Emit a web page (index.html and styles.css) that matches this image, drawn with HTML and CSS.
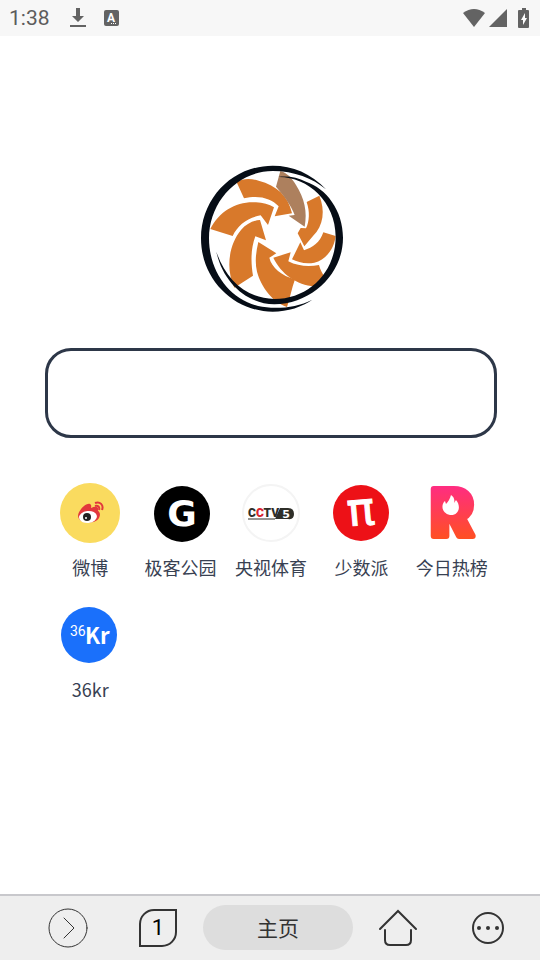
FILE: index.html
```html
<!DOCTYPE html>
<html lang="zh-CN">
<head>
  <meta charset="UTF-8">
  <meta name="viewport" content="width=device-width, initial-scale=1.0">
  <title>主页</title>
  <link rel="stylesheet" href="styles.css">
</head>
<body>
  <header class="status-bar">
    <span class="time">1:38</span>
    <svg class="status-download" width="18" height="22" viewBox="0 0 18 22">
      <path d="M7 1h4v8h4l-6 6-6-6h4zM1 18h16v2H1z"/>
    </svg>
    <svg class="status-app" width="16" height="18" viewBox="0 0 16 18">
      <rect x="1" y="1" width="15" height="16" rx="2"/>
      <text x="8" y="13" text-anchor="middle">A</text>
      <path class="dots" d="M8 14h1v1H8zM10 14h1v1h-1zM12 14h1v1h-1z"/>
    </svg>
    <div class="status-right">
      <svg width="24" height="20" viewBox="0 0 24 20">
        <path d="M12 19L1 5Q12-3 23 5z"/>
      </svg>
      <svg width="20" height="20" viewBox="0 0 20 20">
        <path d="M1 19L19 1v18z"/>
      </svg>
      <svg width="12" height="20" viewBox="0 0 12 20">
        <path d="M4 0h4v2h2q1 0 1 1v16q0 1-1 1H1q-1 0-1-1V3q0-1 1-1h3z"/>
        <path class="bolt" d="M7 5L3 12h2v5l4-7H7z"/>
      </svg>
    </div>
  </header>

  <main class="home">
    <svg class="logo" viewBox="0 0 480 495" role="img" aria-label="logo">
      <g class="logo-arrows">
        <path d="M137 82C155 70 178 70 203 77C258 92 292 122 303 175L251 184L263 154C240 130 205 120 159 130Z"/>
        <path d="M58 222C85 168 138 138 195 142C215 143 235 148 249 157L231 210L209 181C170 188 140 210 125 243Z"/>
        <path d="M130 398C103 340 114 268 150 225C165 207 187 196 207 195L225 256L193 244C178 285 180 325 186 362Z"/>
        <path d="M202 261L256 295L235 308C242 338 272 362 312 373C302 400 297 430 288 456C246 442 210 396 198 350C191 320 195 290 202 261Z"/>
        <path d="M247 308L299 292L292 319C320 334 355 336 384 330C388 345 394 354 398 362L370 394C318 390 270 357 247 308Z"/>
        <path d="M397 232L434 243C430 280 405 315 370 323C345 328 320 322 303 313L328 262L339 286C365 278 387 262 397 232Z"/>
        <path d="M347 141L385 122C403 165 398 212 366 243L340 274L320 235L329 219L345 220C355 200 357 170 347 141Z"/>
      </g>
      <path class="logo-arrow-dim" d="M268 48L255 95C277 120 300 150 311 180L293 182L341 215C350 170 340 130 315 90C303 70 288 53 268 48Z"/>
      <g class="logo-ring">
        <path d="M405 103C360 55 305 32 245 32C125 32 30 130 30 250C30 375 130 470 245 470C290 470 335 455 364 434C325 453 285 460 240 458C130 455 54 360 54 250C54 140 140 48 245 48C310 48 365 70 405 103Z"/>
        <path d="M76 290C95 380 165 446 250 448C365 446 456 355 456 248C456 165 405 100 345 80C320 68 290 62 262 66C350 65 434 140 434 245C434 350 355 432 250 432C165 430 105 375 76 290Z"/>
      </g>
    </svg>

    <form class="search">
      <input type="text" class="search-box" aria-label="搜索">
    </form>

    <nav class="shortcuts">
      <a class="shortcut" href="#">
        <svg class="shortcut-icon" viewBox="0 0 60 60" aria-hidden="true">
          <circle cx="30" cy="30" r="30" fill="#fadb5f"/>
          <path fill="#e2383c" d="M18 33C18 27 27 19 30 21C32 22 31 24 31 25C35 23 39 23 38 27C37 28 42 29 39 35C36 41 19 42 18 33Z"/>
          <ellipse cx="28" cy="34" rx="9" ry="6" fill="#fff" transform="rotate(-7 28 34)"/>
          <circle cx="27" cy="34" r="4" fill="#222"/>
          <circle cx="26" cy="35" r="1" fill="#fff"/>
          <path fill="none" stroke="#e2383c" stroke-width="2" d="M35 20C40 18 44 22 42 27M35 23C38 22 40 24 39 27"/>
        </svg>
        <span>微博</span>
      </a>
      <a class="shortcut" href="#">
        <svg class="shortcut-icon" viewBox="0 0 60 60" aria-hidden="true">
          <circle cx="31" cy="31" r="28" fill="#000"/>
          <text class="mark-geek" x="31" y="43" text-anchor="middle">G</text>
        </svg>
        <span>极客公园</span>
      </a>
      <a class="shortcut" href="#">
        <svg class="shortcut-icon" viewBox="0 0 60 60" aria-hidden="true">
          <circle cx="30" cy="30" r="28" fill="#fff" stroke="#f4f4f4" stroke-width="2"/>
          <path fill="#2e2e28" d="M39 25H47Q53 25 53 31T47 36H34Z"/>
          <path stroke="#2e2e28" d="M7 36H34"/>
          <text class="mark-cctv" x="7" y="34">C<tspan fill="#d8232f">C</tspan>TV</text>
          <text class="mark-five" x="45" y="35" text-anchor="middle">5</text>
        </svg>
        <span>央视体育</span>
      </a>
      <a class="shortcut" href="#">
        <svg class="shortcut-icon" viewBox="0 0 60 60" aria-hidden="true">
          <circle cx="30" cy="30" r="28" fill="#ed1117"/>
          <text class="mark-pi" x="30" y="42" text-anchor="middle" transform="rotate(-5 30 30)">π</text>
        </svg>
        <span>少数派</span>
      </a>
      <a class="shortcut" href="#">
        <svg class="shortcut-icon" viewBox="0 0 60 60" aria-hidden="true">
          <defs>
            <linearGradient id="hot" gradientUnits="userSpaceOnUse" x1="0" y1="4" x2="0" y2="56">
              <stop offset="0" stop-color="#ff2d80"/>
              <stop offset="1" stop-color="#ff5022"/>
            </linearGradient>
          </defs>
          <text class="mark-hot" x="30" y="53" text-anchor="middle" fill="url(#hot)" stroke="url(#hot)">R</text>
          <rect x="16" y="12" width="26" height="24" rx="8" fill="url(#hot)"/>
          <path fill="#fff" d="M28 32C19 30 19 21 23 18L24 21C26 19 28 16 29 12C32 14 33 17 32 20L34 17C40 24 36 33 28 32Z"/>
        </svg>
        <span>今日热榜</span>
      </a>
      <a class="shortcut" href="#">
        <svg class="shortcut-icon" viewBox="0 0 60 60" aria-hidden="true">
          <circle cx="29" cy="30" r="28" fill="#1a70fb"/>
          <text class="mark-36" x="10" y="31">36</text>
          <text class="mark-kr" x="25" y="39">Kr</text>
        </svg>
        <span>36kr</span>
      </a>
    </nav>
  </main>

  <footer class="toolbar">
    <button type="button" class="tool" aria-label="前进">
      <svg width="40" height="40" viewBox="0 0 40 40">
        <circle cx="20" cy="20" r="19" stroke-width="1"/>
        <path stroke-width="1" d="M16 10L26 20L16 30"/>
      </svg>
    </button>
    <button type="button" class="tool" aria-label="标签页">
      <span class="tab-count">1</span>
    </button>
    <button type="button" class="page-title">主页</button>
    <button type="button" class="tool" aria-label="主页">
      <svg width="40" height="40" viewBox="0 0 40 40">
        <path stroke-width="2" d="M2 21L20 3L38 21M7 22V32Q7 37 12 37H28Q33 37 33 32V22"/>
      </svg>
    </button>
    <button type="button" class="tool" aria-label="更多">
      <svg width="40" height="40" viewBox="0 0 40 40">
        <circle cx="20" cy="20" r="15" stroke-width="2"/>
        <g class="dots">
          <circle cx="11" cy="20" r="2"/>
          <circle cx="20" cy="20" r="2"/>
          <circle cx="29" cy="20" r="2"/>
        </g>
      </svg>
    </button>
  </footer>
</body>
</html>
```
FILE: styles.css
```css
* {
  box-sizing: border-box;
}
body {
  display: flex;
  flex-direction: column;
  min-height: 100vh;
  margin: 0;
  background: #fff;
  color: #384152;
  font-family: "Noto Sans CJK SC", sans-serif;
}
svg {
  display: block;
}

.status-bar {
  display: flex;
  align-items: center;
  height: 36px;
  padding: 0 10px 0 9px;
  background: #f7f7f7;
  color: #5c5c5c;
  fill: #636363;
}
.time {
  font-family: Roboto, sans-serif;
  font-size: 21px;
  line-height: 36px;
}
.status-download {
  margin-left: 19px;
}
.status-app {
  margin-left: 16px;
}
.status-app text {
  fill: #fff;
  font: bold 12px Roboto, sans-serif;
}
.status-app .dots,
.bolt {
  fill: #fff;
}
.status-right {
  display: flex;
  align-items: center;
  gap: 2px;
  margin-left: auto;
}
.status-right svg:last-child {
  margin-left: 8px;
}

.home {
  flex: 1;
  display: flex;
  flex-direction: column;
  padding: 119px 43px 24px 45px;
}
.logo {
  width: 160px;
  height: 165px;
  align-self: center;
}
.logo-arrows {
  fill: #d8792b;
}
.logo-arrow-dim {
  fill: #ad805e;
}
.logo-ring {
  fill: #060d16;
}
.search {
  margin-top: 28px;
}
.search-box {
  display: block;
  width: 100%;
  height: 90px;
  padding: 0 24px;
  border: 3px solid #2d3748;
  border-radius: 26px;
  background: #fff;
  color: inherit;
  font: inherit;
  font-size: 24px;
  outline: none;
}

.shortcuts {
  display: grid;
  grid-template-columns: repeat(5, 1fr);
  row-gap: 24px;
  margin-top: 45px;
}
.shortcut {
  display: flex;
  flex-direction: column;
  align-items: center;
  gap: 10px;
  color: inherit;
  font-size: 18px;
  line-height: 28px;
  text-decoration: none;
  white-space: nowrap;
}
.shortcut-icon {
  width: 60px;
  height: 60px;
  overflow: visible;
}
.mark-geek {
  fill: #fff;
  font: bold 36px "DejaVu Sans", sans-serif;
}
.mark-cctv {
  fill: #2e2e28;
  font: 900 12px Roboto, sans-serif;
}
.mark-five {
  fill: #fff;
  font: bold 11px "DejaVu Sans", sans-serif;
}
.mark-pi {
  fill: #fff;
  stroke: #fff;
  stroke-width: 1px;
  font: 46px "DejaVu Sans", sans-serif;
}
.mark-hot {
  stroke-width: 6px;
  stroke-linejoin: round;
  font: 900 64px Inter, sans-serif;
}
.mark-36 {
  fill: #fff;
  font: 14px Roboto, sans-serif;
}
.mark-kr {
  fill: #fff;
  font: bold 22px "Noto Sans CJK SC", sans-serif;
}

.toolbar {
  display: grid;
  grid-template-columns: 3fr 3fr 5fr 3fr 3fr;
  align-items: center;
  height: 66px;
  padding: 0 7px 1px 23px;
  border-top: 2px solid #c8c8cc;
  background: #eee;
}
.toolbar button {
  padding: 0;
  border: none;
  background: none;
  color: #333;
  cursor: pointer;
}
.tool {
  display: flex;
  justify-content: center;
}
.tool svg {
  fill: none;
  stroke: #333;
  stroke-linecap: round;
}
.tool .dots {
  fill: #333;
  stroke: none;
}
.tab-count {
  width: 38px;
  height: 38px;
  border: 2px solid #333;
  border-radius: 15px 0;
  color: #000;
  font: 22px/34px Roboto, sans-serif;
}
.toolbar .page-title {
  height: 45px;
  padding-bottom: 2px;
  border-radius: 23px;
  background: #ddd;
  font: 21px "Noto Sans CJK SC", sans-serif;
}
```
